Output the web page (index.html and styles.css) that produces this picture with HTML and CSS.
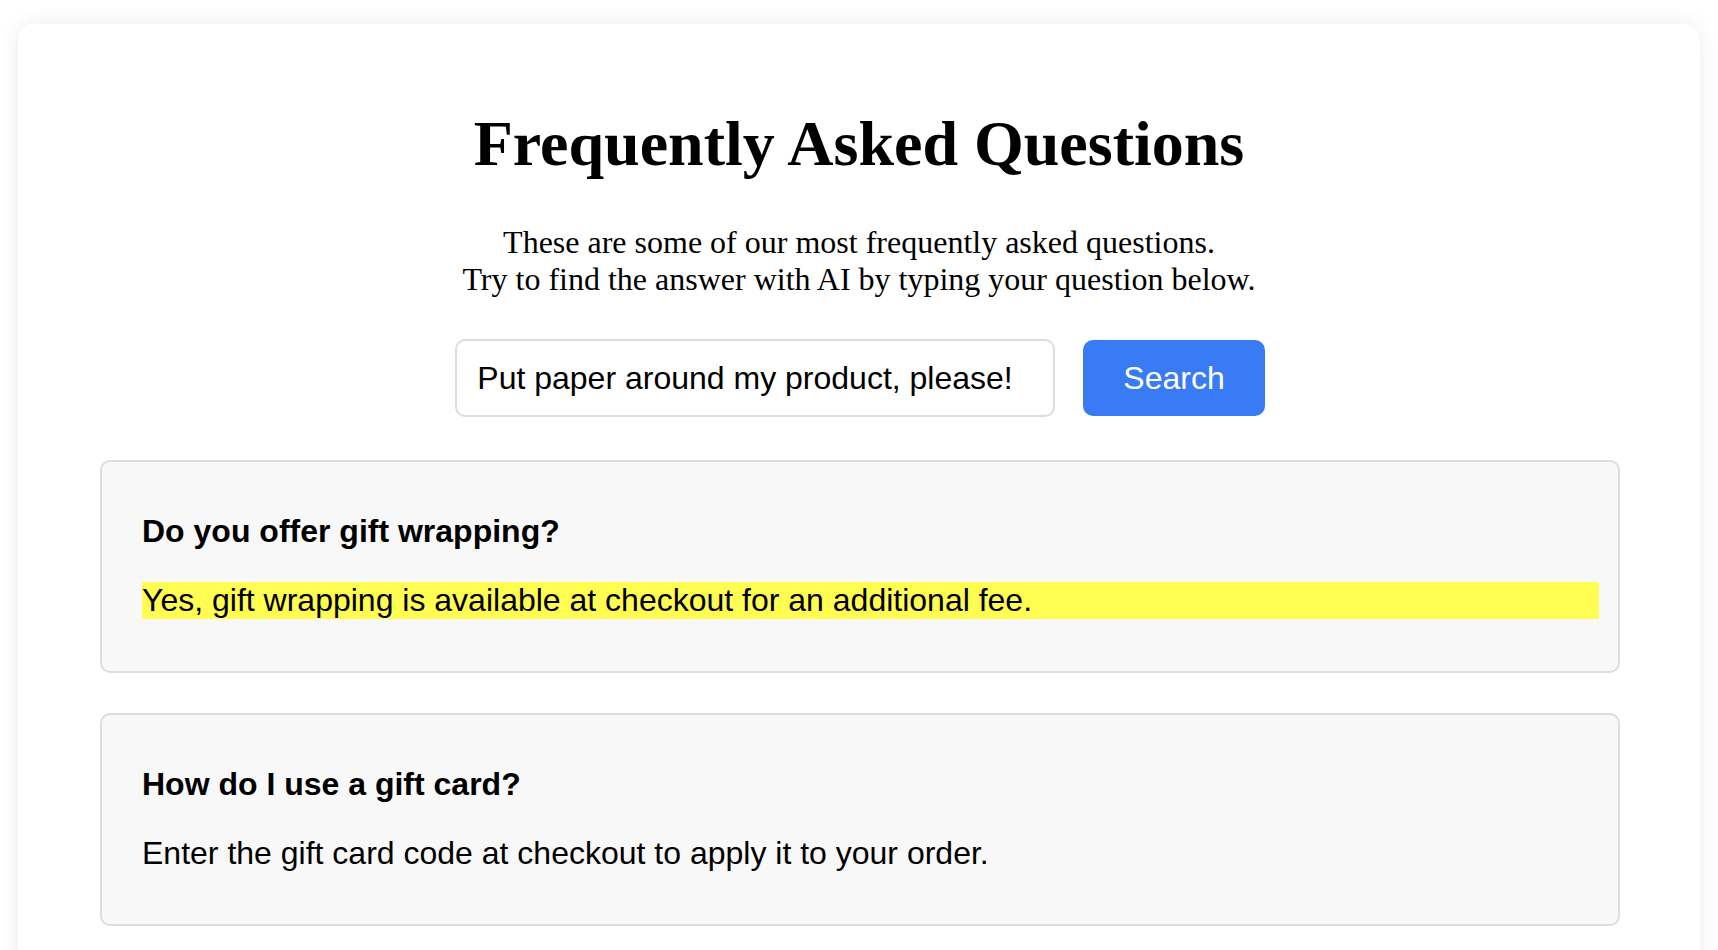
FILE: index.html
```html
<!DOCTYPE html>
<html lang="en">
<head>
  <meta charset="UTF-8">
  <meta name="viewport" content="width=device-width, initial-scale=1.0">
  <title>Frequently Asked Questions</title>
  <link rel="stylesheet" href="styles.css">
</head>
<body>
  <div class="container">
    <h1>Frequently Asked Questions</h1>
    <p class="intro">These are some of our most frequently asked questions.<br>
      Try to find the answer with AI by typing your question below.</p>

    <!-- Recherche -->
    <form class="search" onsubmit="return false">
      <input type="text" id="question" value="Put paper around my product, please!">
      <button type="submit">Search</button>
    </form>

    <div class="faq-list">
      <div class="faq">
        <h3>Do you offer gift wrapping?</h3>
        <p class="answer highlight">Yes, gift wrapping is available at checkout for an additional fee.</p>
      </div>
      <div class="faq">
        <h3>How do I use a gift card?</h3>
        <p class="answer">Enter the gift card code at checkout to apply it to your order.</p>
      </div>
    </div>
  </div>
</body>
</html>
```

FILE: styles.css
```css
body {
  margin: 0;
  background-color: #fff;
  font-family: 'Liberation Serif', 'Times New Roman', serif;
  color: #000;
}

.container {
  margin: 24px 18px 0;
  padding: 40px 40px 60px;
  background-color: #fff;
  border-radius: 16px;
  box-shadow: 0 0 20px rgba(0, 0, 0, 0.08);
}

h1 {
  font-size: 64px;
  text-align: center;
  margin: 43px 0;
}

.intro {
  font-size: 32px;
  text-align: center;
  margin: 0 0 41px;
}

.search {
  display: flex;
  justify-content: center;
  align-items: center;
  gap: 28px;
  margin: 0 0 43px;
  padding-left: 2px;
}

.search input {
  width: 600px;
  height: 78px;
  box-sizing: border-box;
  padding: 0 20px;
  border: 2px solid #ddd;
  border-radius: 10px;
  font-family: 'Liberation Sans', Arial, sans-serif;
  font-size: 32px;
  color: #000;
  outline: none;
}

.search button {
  height: 76px;
  padding: 0 40px;
  border: none;
  border-radius: 10px;
  background-color: #387bf4;
  color: #fff;
  font-family: 'Liberation Sans', Arial, sans-serif;
  font-size: 32px;
  cursor: pointer;
}

.faq-list {
  margin: 0 40px 0 42px;
  display: flex;
  flex-direction: column;
  gap: 40px;
}

.faq {
  padding: 19px 19px 20px 40px;
  background-color: #f8f8f8;
  border: 2px solid #ddd;
  border-radius: 10px;
  font-family: 'Liberation Sans', Arial, sans-serif;
}

.faq h3 {
  font-size: 32px;
  margin: 32px 0;
}

.answer {
  font-size: 32px;
  margin: 32px 0;
}

.highlight {
  background-color: #fffc52;
}
```
